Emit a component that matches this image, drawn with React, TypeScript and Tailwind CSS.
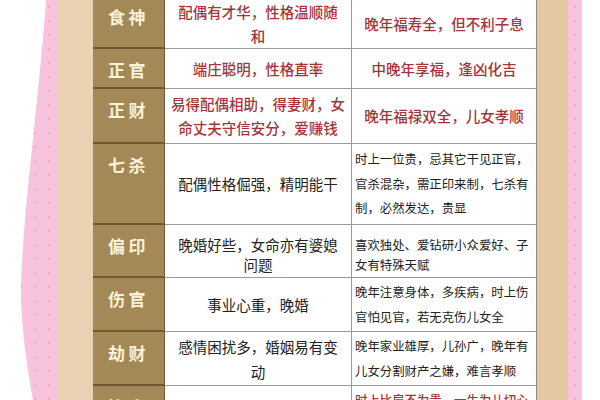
import React from "react";

type Row = {
  label: string;
  h: string;
  mid: string[];
  midRed: boolean;
  right: string[];
  rightSmall: boolean;
  rightRed?: boolean;
  lead: string;
};

const ROWS: Row[] = [
  { label: "食神", h: "h-[53px]", mid: ["配偶有才华，性格温顺随", "和"], midRed: true, right: ["晚年福寿全，但不利子息"], rightSmall: false, lead: "leading-[24px] pt-[4px]" },
  { label: "正官", h: "h-[40px]", mid: ["端庄聪明，性格直率"], midRed: true, right: ["中晚年享福，逢凶化吉"], rightSmall: false, lead: "leading-[24px]" },
  { label: "正财", h: "h-[55px]", mid: ["易得配偶相助，得妻财，女", "命丈夫守信安分，爱赚钱"], midRed: true, right: ["晚年福禄双全，儿女孝顺"], rightSmall: false, lead: "leading-[24px]" },
  { label: "七杀", h: "h-[81px]", mid: ["配偶性格倔强，精明能干"], midRed: false, right: ["时上一位贵，忌其它干见正官，", "官杀混杂，需正印来制，七杀有", "制，必然发达，贵显"], rightSmall: true, lead: "leading-[24.5px]" },
  { label: "偏印", h: "h-[53px]", mid: ["晚婚好些，女命亦有婆媳", "问题"], midRed: false, right: ["喜欢独处、爱钻研小众爱好、子", "女有特殊天赋"], rightSmall: true, lead: "leading-[20px] pt-[8px]" },
  { label: "伤官", h: "h-[54px]", mid: ["事业心重，晚婚"], midRed: false, right: ["晚年注意身体，多疾病，时上伤", "官怕见官，若无克伤儿女全"], rightSmall: true, lead: "leading-[25px]" },
  { label: "劫财", h: "h-[54px]", mid: ["感情困扰多，婚姻易有变", "动"], midRed: false, right: ["晚年家业雄厚，儿孙广，晚年有", "儿女分割财产之嫌，难言孝顺"], rightSmall: true, lead: "leading-[25px]" },
  { label: "比肩", h: "h-[60px]", mid: [""], midRed: true, right: ["时上比肩不为贵，一生为儿切心", "劳力，晚年平顺"], rightSmall: true, rightRed: true, lead: "leading-[25px] !justify-start pt-[2px]" },
];

const FONT = { fontFamily: '"Noto Sans CJK SC", "Noto Sans", sans-serif' };

function Dots({ id }: { id: string }) {
  return (
    <defs>
      <pattern id={id} width="14" height="14" patternUnits="userSpaceOnUse">
        <rect width="14" height="14" fill="#f8c3dc" />
        <circle cx="7" cy="7" r="1.1" fill="#e7a6c5" />
      </pattern>
    </defs>
  );
}

function TableRow({ r }: { r: Row }) {
  return (
    <div className={`grid shrink-0 grid-cols-[72px_187px_184px] ${r.h}`}>
      <div className="flex justify-center border-b-2 border-r border-[#6f5934] bg-[#a38958] pt-[9px]">
        <span className="text-[17px] font-bold leading-[24px] tracking-[0.2em] text-[#fdf2d6]">{r.label}</span>
      </div>
      <div className={`flex flex-col items-center justify-center border-b border-r border-[#9b9b9b] bg-white px-[4px] text-[14.5px] ${r.lead} ${r.midRed ? "font-medium text-[#a5353b]" : "text-[#222]"}`}>
        {r.mid.map((l, i) => (
          <span key={i} className="whitespace-nowrap">{l}</span>
        ))}
      </div>
      {r.rightSmall ? (
        <div className={`flex flex-col justify-center border-b border-[#9b9b9b] bg-white pl-[3px] text-[12.4px] ${r.rightRed ? "font-medium text-[#a5353b]" : "text-[#222]"} ${r.lead}`}>
          {r.right.map((l, i) => (
            <span key={i} className="whitespace-nowrap">{l}</span>
          ))}
        </div>
      ) : (
        <div className={`flex flex-col items-center justify-center border-b border-[#9b9b9b] bg-white text-[14.5px] font-medium text-[#a5353b] ${r.lead}`}>
          {r.right.map((l, i) => (
            <span key={i} className="whitespace-nowrap">{l}</span>
          ))}
        </div>
      )}
    </div>
  );
}

export default function App() {
  return (
    <div className="flex h-[400px] w-[600px] overflow-hidden bg-white" style={FONT}>
      <svg width="57" height="400" viewBox="0 0 57 400" className="shrink-0">
        <Dots id="dl" />
        <path d="M57 0 L46 0 C40 90 22 220 21 290 C21 330 28 370 33 400 L57 400 Z" fill="url(#dl)" />
      </svg>
      <div className="w-[36px] shrink-0 bg-[#e8d2b1]" />
      <div className="flex w-[444px] shrink-0 flex-col border-r border-[#8a8a8a] -mt-[4px]">
        {ROWS.map((r) => (
          <TableRow key={r.label} r={r} />
        ))}
      </div>
      <div className="w-[31px] shrink-0 bg-[#e3c8a2]" />
      <svg width="14" height="400" viewBox="0 0 14 400" className="shrink-0">
        <Dots id="dr" />
        <rect width="14" height="400" fill="url(#dr)" />
      </svg>
      <div className="flex-1 bg-white" />
    </div>
  );
}
